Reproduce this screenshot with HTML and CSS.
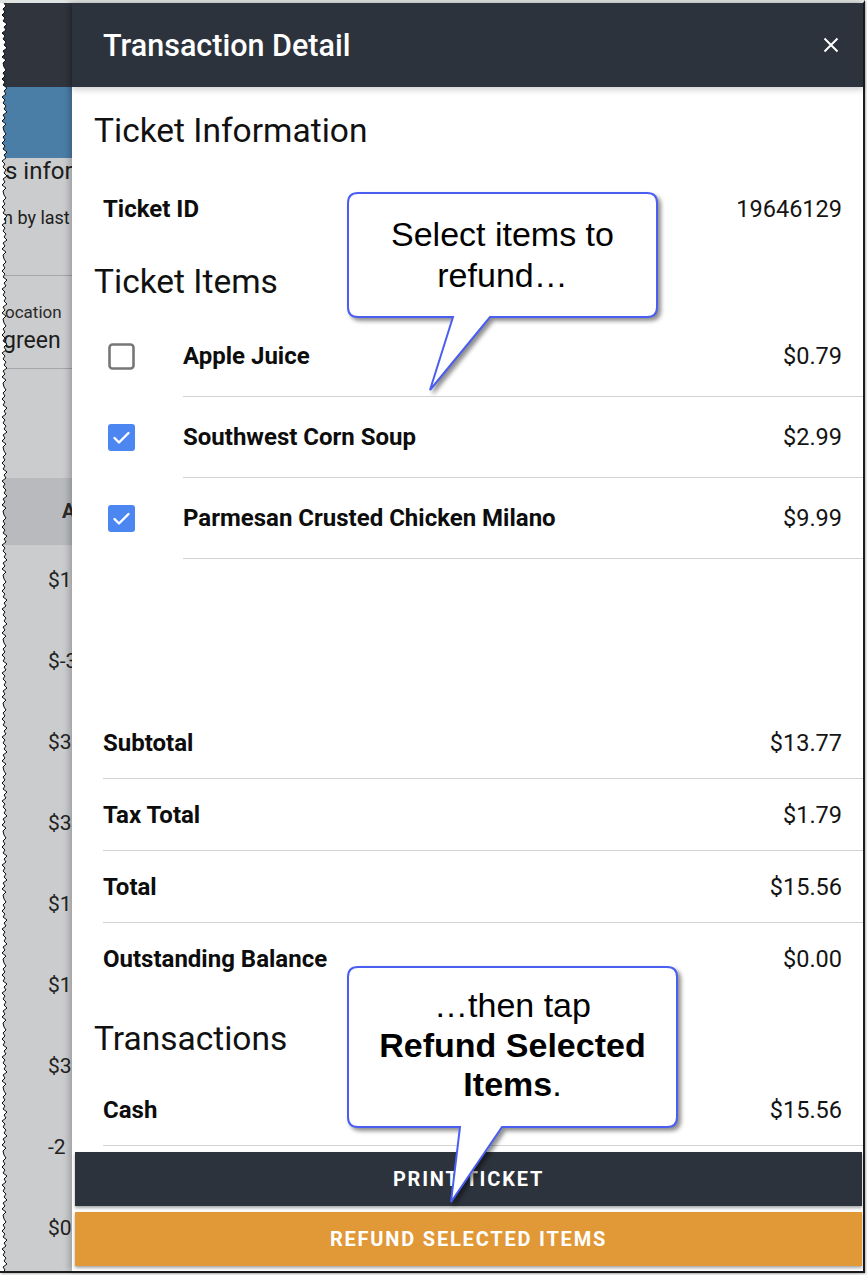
FILE: index.html
```html
<!DOCTYPE html>
<html lang="en">
<head>
<meta charset="utf-8">
<title>Transaction Detail</title>
<link rel="stylesheet" href="styles.css">
</head>
<body>
<div class="frame">
  <div class="window">
    <div class="bg-page">
      <div class="bg-header"></div>
      <div class="bg-banner"></div>
      <div class="bg-body">
        <div class="bg-title">s information</div>
        <div class="bg-sub">n by last name</div>
        <div class="bg-rule"></div>
        <div class="bg-label">ocation</div>
        <div class="bg-value">green</div>
        <div class="bg-rule bg-rule-2"></div>
        <div class="bg-thead">Amount</div>
        <div class="bg-row">$14.25</div>
        <div class="bg-row">$-3.50</div>
        <div class="bg-row">$31.75</div>
        <div class="bg-row">$3.99</div>
        <div class="bg-row">$15.56</div>
        <div class="bg-row">$12.40</div>
        <div class="bg-row">$35.10</div>
        <div class="bg-row">-2</div>
        <div class="bg-row">$0.00</div>
      </div>
    </div>

    <aside class="drawer">
      <header class="drawer-head">
        <h1>Transaction Detail</h1>
        <button class="close" aria-label="Close">
          <svg width="16" height="16" viewBox="0 0 16 16"><path d="M1.5 1.5 L14.5 14.5 M14.5 1.5 L1.5 14.5" stroke="#fff" stroke-width="2" fill="none"/></svg>
        </button>
      </header>

      <div class="drawer-body">
        <h2 class="h-first">Ticket Information</h2>
        <div class="kv kv-id">
          <span class="label">Ticket ID</span>
          <span class="value">19646129</span>
        </div>

        <h2 class="h-items">Ticket Items</h2>
        <div class="items">
          <div class="item">
            <div class="check-cell">
              <svg class="cb" width="27" height="27" viewBox="0 0 27 27"><rect x="1.5" y="1.5" width="24" height="24" rx="3" fill="#fff" stroke="#777" stroke-width="2.6"/></svg>
            </div>
            <div class="item-main"><span class="label">Apple Juice</span><span class="value">$0.79</span></div>
          </div>
          <div class="item">
            <div class="check-cell">
              <svg class="cb" width="27" height="27" viewBox="0 0 27 27"><rect x="0" y="0" width="27" height="27" rx="3" fill="#4b86f1"/><path d="M6.5 14 L11 18.5 L20.5 9" stroke="#fff" stroke-width="2.4" fill="none" stroke-linecap="round" stroke-linejoin="round"/></svg>
            </div>
            <div class="item-main"><span class="label">Southwest Corn Soup</span><span class="value">$2.99</span></div>
          </div>
          <div class="item">
            <div class="check-cell">
              <svg class="cb" width="27" height="27" viewBox="0 0 27 27"><rect x="0" y="0" width="27" height="27" rx="3" fill="#4b86f1"/><path d="M6.5 14 L11 18.5 L20.5 9" stroke="#fff" stroke-width="2.4" fill="none" stroke-linecap="round" stroke-linejoin="round"/></svg>
            </div>
            <div class="item-main"><span class="label">Parmesan Crusted Chicken Milano</span><span class="value">$9.99</span></div>
          </div>
        </div>

        <div class="summary">
          <div class="kv ruled"><span class="label">Subtotal</span><span class="value">$13.77</span></div>
          <div class="kv ruled"><span class="label">Tax Total</span><span class="value">$1.79</span></div>
          <div class="kv ruled"><span class="label">Total</span><span class="value">$15.56</span></div>
          <div class="kv"><span class="label">Outstanding Balance</span><span class="value">$0.00</span></div>
        </div>

        <h2 class="h-trans">Transactions</h2>
        <div class="kv ruled kv-cash"><span class="label">Cash</span><span class="value">$15.56</span></div>
      </div>

      <footer class="drawer-foot">
        <button class="btn btn-dark">Print Ticket</button>
        <button class="btn btn-orange">Refund Selected Items</button>
      </footer>
    </aside>

    <svg class="torn" width="10" height="1268" viewBox="0 0 10 1268">
      <defs>
        <pattern id="tornTile" patternUnits="userSpaceOnUse" width="10" height="64">
          <path d="M0 0 L4 0 L6 3 L3 6 L5 9 L2 12 L5 15 L3 18 L7 21 L4 24 L6 27 L2 30 L5 33 L3 36 L6 39 L4 42 L7 45 L3 48 L5 51 L2 54 L6 57 L3 60 L4 64 L0 64 Z" fill="#fff"/>
          <path d="M4 0 L6 3 L3 6 L5 9 L2 12 L5 15 L3 18 L7 21 L4 24 L6 27 L2 30 L5 33 L3 36 L6 39 L4 42 L7 45 L3 48 L5 51 L2 54 L6 57 L3 60 L4 64" fill="none" stroke="#111" stroke-width="1"/>
        </pattern>
      </defs>
      <rect x="0" y="0" width="10" height="1268" fill="url(#tornTile)"/>
    </svg>
  </div>

  <div class="callout callout-1">
    <svg class="bubble" width="330" height="215" viewBox="0 0 330 215">
      <path d="M18 8 H307 Q317 8 317 18 V122 Q317 132 307 132 H150 L90 205 L113 132 H18 Q8 132 8 122 V18 Q8 8 18 8 Z" fill="#fff" stroke="#4a5ff2" stroke-width="2"/>
    </svg>
    <div class="callout-text">Select items to<br>refund…</div>
  </div>

  <div class="callout callout-2">
    <svg class="bubble" width="345" height="250" viewBox="0 0 345 250">
      <path d="M18 8 H327 Q337 8 337 18 V158 Q337 168 327 168 H162 L111 243 L120 168 H18 Q8 168 8 158 V18 Q8 8 18 8 Z" fill="#fff" stroke="#4a5ff2" stroke-width="2"/>
    </svg>
    <div class="callout-text">…then tap<br><b>Refund Selected<br>Items</b>.</div>
  </div>
</div>
</body>
</html>
```

FILE: styles.css
```css
* { box-sizing: border-box; }

body {
  margin: 0;
  background: #fff;
}

.frame {
  position: relative;
  width: 867px;
  height: 1275px;
  overflow: hidden;
  background: #fff;
  font-family: Roboto, "Liberation Sans", Arial, sans-serif;
}

.window {
  position: relative;
  width: 865px;
  height: 1273px;
  border-top: 3px solid #dfe3e2;
  border-right: 2px solid #1d1d1d;
  border-bottom: 2px solid #1d1d1d;
  box-shadow: 1px 1px 2px rgba(0, 0, 0, 0.3);
  display: grid;
  grid-template-columns: 72px 1fr;
}

/* ---------- dimmed background page ---------- */
.bg-page {
  overflow: hidden;
  background: #cbcccd;
  color: #1c1c1c;
  white-space: nowrap;
}

.bg-header {
  height: 84px;
  background: #30353d;
}

.bg-banner {
  height: 71px;
  background: #4b7ea7;
}

.bg-title {
  font-size: 24px;
  line-height: 26px;
  padding-left: 5px;
}

.bg-sub {
  font-size: 18px;
  line-height: 20px;
  margin-top: 24px;
  padding-left: 3px;
}

.bg-rule {
  height: 1px;
  background: #a4a6a9;
  margin-top: 47px;
  margin-left: 5px;
}

.bg-label {
  font-size: 17px;
  line-height: 20px;
  margin-top: 26px;
  padding-left: 5px;
  color: #2a2a2a;
}

.bg-value {
  font-size: 23px;
  line-height: 28px;
  margin-top: 5px;
  padding-left: 3px;
}

.bg-rule-2 { margin-top: 13px; }

.bg-thead {
  margin-top: 109px;
  height: 67px;
  line-height: 67px;
  background: #b8babd;
  font-size: 20px;
  font-weight: 700;
  padding-left: 62px;
  color: #2b2b2b;
}

.bg-row {
  height: 81px;
  padding-top: 24px;
  font-size: 21px;
  line-height: 22px;
  padding-left: 48px;
  color: #222;
}

/* ---------- drawer ---------- */
.drawer {
  position: relative;
  z-index: 1;
  display: flex;
  flex-direction: column;
  min-height: 0;
  background: #fff;
  box-shadow: -3px 0 6px rgba(0, 0, 0, 0.22);
}

.drawer-head {
  position: relative;
  z-index: 2;
  height: 84px;
  flex: none;
  background: #2d333c;
  display: flex;
  align-items: center;
  justify-content: space-between;
  padding: 0 24px 0 31px;
  box-shadow: 0 3px 6px rgba(0, 0, 0, 0.18);
}

.drawer-head h1 {
  margin: 0;
  color: #fff;
  font-size: 30.5px;
  font-weight: 500;
}

.close {
  background: none;
  border: 0;
  padding: 0;
  width: 16px;
  height: 16px;
  display: flex;
}

.drawer-body {
  flex: 1;
  min-height: 0;
  overflow: hidden;
  color: #111;
}

.drawer-body h2 {
  margin: 24px 0 0;
  padding-left: 22px;
  font-size: 33.5px;
  font-weight: 400;
  line-height: 40px;
  color: #111;
}

.drawer-body h2.h-items { margin-top: 17px; }

.kv {
  display: flex;
  align-items: center;
  justify-content: space-between;
  height: 72px;
  margin-left: 31px;
  padding-right: 21px;
}

.kv.ruled { border-bottom: 1px solid #d2d2d2; }

.kv-id { margin-top: 22px; }

.label { font-weight: 700; font-size: 24px; color: #0d0d0d; }
.value { font-weight: 400; font-size: 23.5px; color: #141414; }

.items { margin-top: 14px; }

.item {
  display: flex;
  height: 81px;
}

.check-cell {
  width: 111px;
  flex: none;
  padding-left: 36px;
  display: flex;
  align-items: center;
}

.cb { display: block; }

.item-main {
  flex: 1;
  display: flex;
  align-items: center;
  justify-content: space-between;
  padding-right: 21px;
  border-bottom: 1px solid #d2d2d2;
}

.summary { margin-top: 148px; }

.kv-cash { margin-top: 15px; }

.drawer-foot {
  flex: none;
  display: flex;
  flex-direction: column;
  gap: 6px;
  padding: 4px 1px 5px 3px;
}

.btn {
  height: 54px;
  border: 0;
  color: #fff;
  font-family: Roboto, "Liberation Sans", Arial, sans-serif;
  font-size: 20px;
  font-weight: 700;
  letter-spacing: 1.8px;
  text-transform: uppercase;
  box-shadow: 0 2px 3px rgba(0, 0, 0, 0.35);
}

.btn-dark { background: #2d333c; }
.btn-orange { background: #e19837; }

/* ---------- torn edge ---------- */
.torn {
  position: absolute;
  left: 0;
  top: 0;
  z-index: 3;
}

/* ---------- callouts ---------- */
.callout {
  position: absolute;
  z-index: 5;
}

.callout .bubble {
  position: absolute;
  left: -8px;
  top: -8px;
  filter: drop-shadow(3px 3px 2px rgba(0, 0, 0, 0.45));
}

.callout-text {
  position: relative;
  text-align: center;
  font-family: "Liberation Sans", Arial, sans-serif;
  font-size: 34px;
  color: #000;
}

.callout-text b { font-weight: 700; }

.callout-1 {
  left: 348px;
  top: 193px;
  width: 309px;
  height: 124px;
  padding-top: 21px;
}

.callout-1 .callout-text { line-height: 41px; }

.callout-2 {
  left: 348px;
  top: 967px;
  width: 329px;
  height: 160px;
  padding-top: 19px;
}

.callout-2 .callout-text { line-height: 39.5px; }
```
